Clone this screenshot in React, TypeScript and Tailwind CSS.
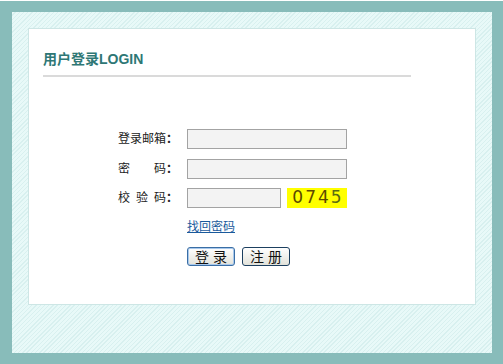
import React from "react";

export default function App() {
  return (
    <div
      className="w-[503px] h-[364px] bg-[#88bcba] border-t border-white pt-[11px] pl-[12px] pr-[11px] pb-[11px]"
      style={{ fontFamily: '"Liberation Sans", "Noto Sans CJK SC", sans-serif' }}
    >
      <div className="h-[341px] bg-[repeating-linear-gradient(135deg,#e8f9f8_0px,#e8f9f8_2px,#d8f0ef_2px,#d8f0ef_3px)] pt-[16px] px-[16px] pb-[48px]">
        <div className="h-[277px] bg-white border border-[#cde6e5] pl-[14px] pt-[21px]">
          <h1 className="text-[14px] leading-[18px] font-bold text-[#2e7775]">用户登录LOGIN</h1>
          <div className="mt-[7px] w-[368px] h-[2px] bg-[#dadada]" />

          <div className="mt-[52px] ml-[75px] flex flex-col text-[12px] text-[#222]">
            <div className="flex items-center h-[20px]">
              <span className="w-[60px] flex justify-between">
                <span>登</span><span>录</span><span>邮</span><span>箱</span><span className="font-bold">：</span>
              </span>
              <input className="ml-[9px] w-[160px] h-[20px] bg-[#f3f3f3] border border-[#a3a3a3] outline-none" />
            </div>
            <div className="flex items-center h-[20px] mt-[10px]">
              <span className="w-[60px] flex">
                <span className="w-[36px]">密</span><span>码</span><span className="font-bold">：</span>
              </span>
              <input type="password" className="ml-[9px] w-[160px] h-[20px] bg-[#f3f3f3] border border-[#a3a3a3] outline-none" />
            </div>
            <div className="flex items-center h-[20px] mt-[9px]">
              <span className="w-[60px] flex">
                <span className="w-[18px]">校</span><span className="w-[18px]">验</span><span>码</span><span className="font-bold">：</span>
              </span>
              <input className="ml-[9px] w-[94px] h-[20px] bg-[#f3f3f3] border border-[#a3a3a3] outline-none" />
              <span
                className="ml-[6px] w-[60px] h-[20px] bg-[#ffff00] flex items-center justify-center pl-[2px] text-[17px] font-normal tracking-[2px] text-[#5a4800]"
                style={{ fontFamily: '"DejaVu Sans", sans-serif' }}
              >
                0<span className="text-[#604a00]">7</span>4<span className="text-[#5b6c12]">5</span>
              </span>
            </div>
            <div className="ml-[69px] mt-[10px]">
              <a href="#" className="text-[12px] text-[#1a5a9c] underline">找回密码</a>
            </div>
            <div className="ml-[69px] mt-[11px] flex gap-[7px]">
              <button className="w-[48px] h-[19px] rounded-[3px] border border-[#3a6ea5] bg-gradient-to-b from-white to-[#e2e2da] text-[14px] leading-none text-[#111] shadow-[inset_0_0_0_1px_#a8c8ec]">
                登&nbsp;录
              </button>
              <button className="w-[48px] h-[19px] rounded-[3px] border border-[#1c3f5f] bg-gradient-to-b from-white to-[#e2e2da] text-[14px] leading-none text-[#111]">
                注&nbsp;册
              </button>
            </div>
          </div>
        </div>
      </div>
    </div>
  );
}
